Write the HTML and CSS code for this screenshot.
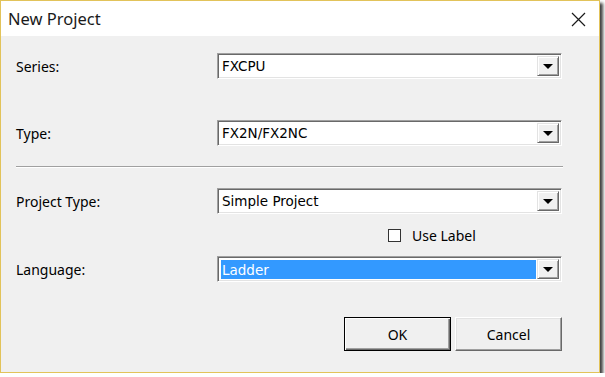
FILE: index.html
```html
<!DOCTYPE html>
<html lang="en">

<head>
    <meta charset="UTF-8">
    <meta name="viewport" content="width=device-width, initial-scale=1.0">
    <title>New Project</title>
    <link rel="stylesheet" href="styles.css">
</head>

<body>
    <div class="dialog">
        <div class="titlebar">
            <span class="title">New Project</span>
            <svg class="close" width="15" height="15" viewBox="0 0 15 15">
                <path d="M1 1 L14 14 M14 1 L1 14" stroke="#1a1a1a" stroke-width="1.2" fill="none" />
            </svg>
        </div>

        <div class="content">
            <div class="row row-series">
                <label class="label">Series:</label>
                <div class="combo">
                    <span class="combo-text">FXCPU</span>
                    <span class="combo-btn"><span class="arrow"></span></span>
                </div>
            </div>

            <div class="row row-type">
                <label class="label">Type:</label>
                <div class="combo">
                    <span class="combo-text">FX2N/FX2NC</span>
                    <span class="combo-btn"><span class="arrow"></span></span>
                </div>
            </div>

            <div class="separator"></div>

            <div class="row row-ptype">
                <label class="label">Project Type:</label>
                <div class="combo">
                    <span class="combo-text">Simple Project</span>
                    <span class="combo-btn"><span class="arrow"></span></span>
                </div>
            </div>

            <div class="check-row">
                <span class="checkbox"></span>
                <span class="check-label">Use Label</span>
            </div>

            <div class="row row-lang">
                <label class="label">Language:</label>
                <div class="combo">
                    <span class="combo-text selected">Ladder</span>
                    <span class="combo-btn"><span class="arrow"></span></span>
                </div>
            </div>

            <div class="buttons">
                <button class="btn default">OK</button>
                <button class="btn">Cancel</button>
            </div>
        </div>
    </div>
</body>

</html>
```

FILE: styles.css
```css
body {
    margin: 0;
    padding: 0;
    background: #fff;
    font-family: "Noto Sans", "Open Sans", sans-serif;
}

.dialog {
    width: 600px;
    height: 373px;
    box-sizing: border-box;
    border: 1px solid #e2c35a;
    background: #f0f0f0;
    box-shadow: 3px 3px 3px 0 rgba(0, 0, 0, 0.75);
    display: flex;
    flex-direction: column;
}

.titlebar {
    height: 35px;
    background: #fff;
    display: flex;
    align-items: center;
    justify-content: space-between;
    padding: 0 13px 0 7px;
}

.title {
    font-size: 16.5px;
    color: #1a1a1a;
}

.close {
    margin-top: 2px;
}

.content {
    padding: 0 37px 0 15px;
}

.row {
    display: flex;
    align-items: center;
}

.label {
    width: 201px;
    font-size: 14px;
    color: #000;
    padding-top: 1px;
}

.row-series {
    margin-top: 17px;
}

.row-type {
    margin-top: 41px;
}

.row-ptype {
    margin-top: 20px;
}

.row-lang {
    margin-top: 14px;
}

.combo {
    flex: 1;
    height: 26px;
    box-sizing: border-box;
    background: #fff;
    border-top: 1px solid #a0a0a0;
    border-left: 1px solid #a0a0a0;
    border-right: 1px solid #fff;
    border-bottom: 1px solid #fff;
    box-shadow: inset 1px 1px 0 #696969, inset -1px -1px 0 #e3e3e3;
    display: flex;
    padding: 2px;
}

.combo-text {
    flex: 1;
    font-family: "DejaVu Sans", sans-serif;
    font-size: 13.5px;
    line-height: 21px;
    padding-left: 2px;
    color: #000;
}

.combo-text.selected {
    background: #3399ff;
    color: #fff;
    margin: 1px 1px 0 1px;
    padding-left: 1px;
    line-height: 20px;
}

.combo-btn {
    width: 22px;
    box-sizing: border-box;
    background: #f0f0f0;
    border-top: 1px solid #e3e3e3;
    border-left: 1px solid #e3e3e3;
    border-right: 1px solid #696969;
    border-bottom: 1px solid #696969;
    box-shadow: inset 1px 1px 0 #fff, inset -1px -1px 0 #a0a0a0;
    display: flex;
    align-items: center;
    justify-content: center;
}

.arrow {
    width: 0;
    height: 0;
    border-left: 5px solid transparent;
    border-right: 5px solid transparent;
    border-top: 5px solid #000;
    margin-top: 1px;
}

.separator {
    margin-top: 20px;
    height: 1px;
    margin-right: -1px;
    background: #a0a0a0;
    border-bottom: 1px solid #fff;
}

.check-row {
    margin-top: 15px;
    margin-left: 372px;
    display: flex;
    align-items: center;
    height: 13px;
}

.checkbox {
    width: 13px;
    height: 13px;
    box-sizing: border-box;
    background: #fff;
    border: 1px solid #333;
}

.check-label {
    margin-left: 11px;
    font-size: 14px;
    color: #000;
}

.buttons {
    margin-top: 35px;
    display: flex;
    justify-content: flex-end;
    gap: 4px;
}

.btn {
    width: 107px;
    height: 34px;
    box-sizing: border-box;
    font-family: "Noto Sans", "Open Sans", sans-serif;
    font-size: 14px;
    color: #000;
    background: #f0f0f0;
    border-top: 1px solid #fff;
    border-left: 1px solid #fff;
    border-right: 1px solid #696969;
    border-bottom: 1px solid #696969;
    box-shadow: inset -1px -1px 0 #a0a0a0, inset 1px 1px 0 #e3e3e3;
    padding: 0;
}

.btn.default {
    border: 1px solid #000;
    box-shadow: inset 1px 1px 0 #fff, inset -1px -1px 0 #696969, inset -2px -2px 0 #a0a0a0;
}
```
